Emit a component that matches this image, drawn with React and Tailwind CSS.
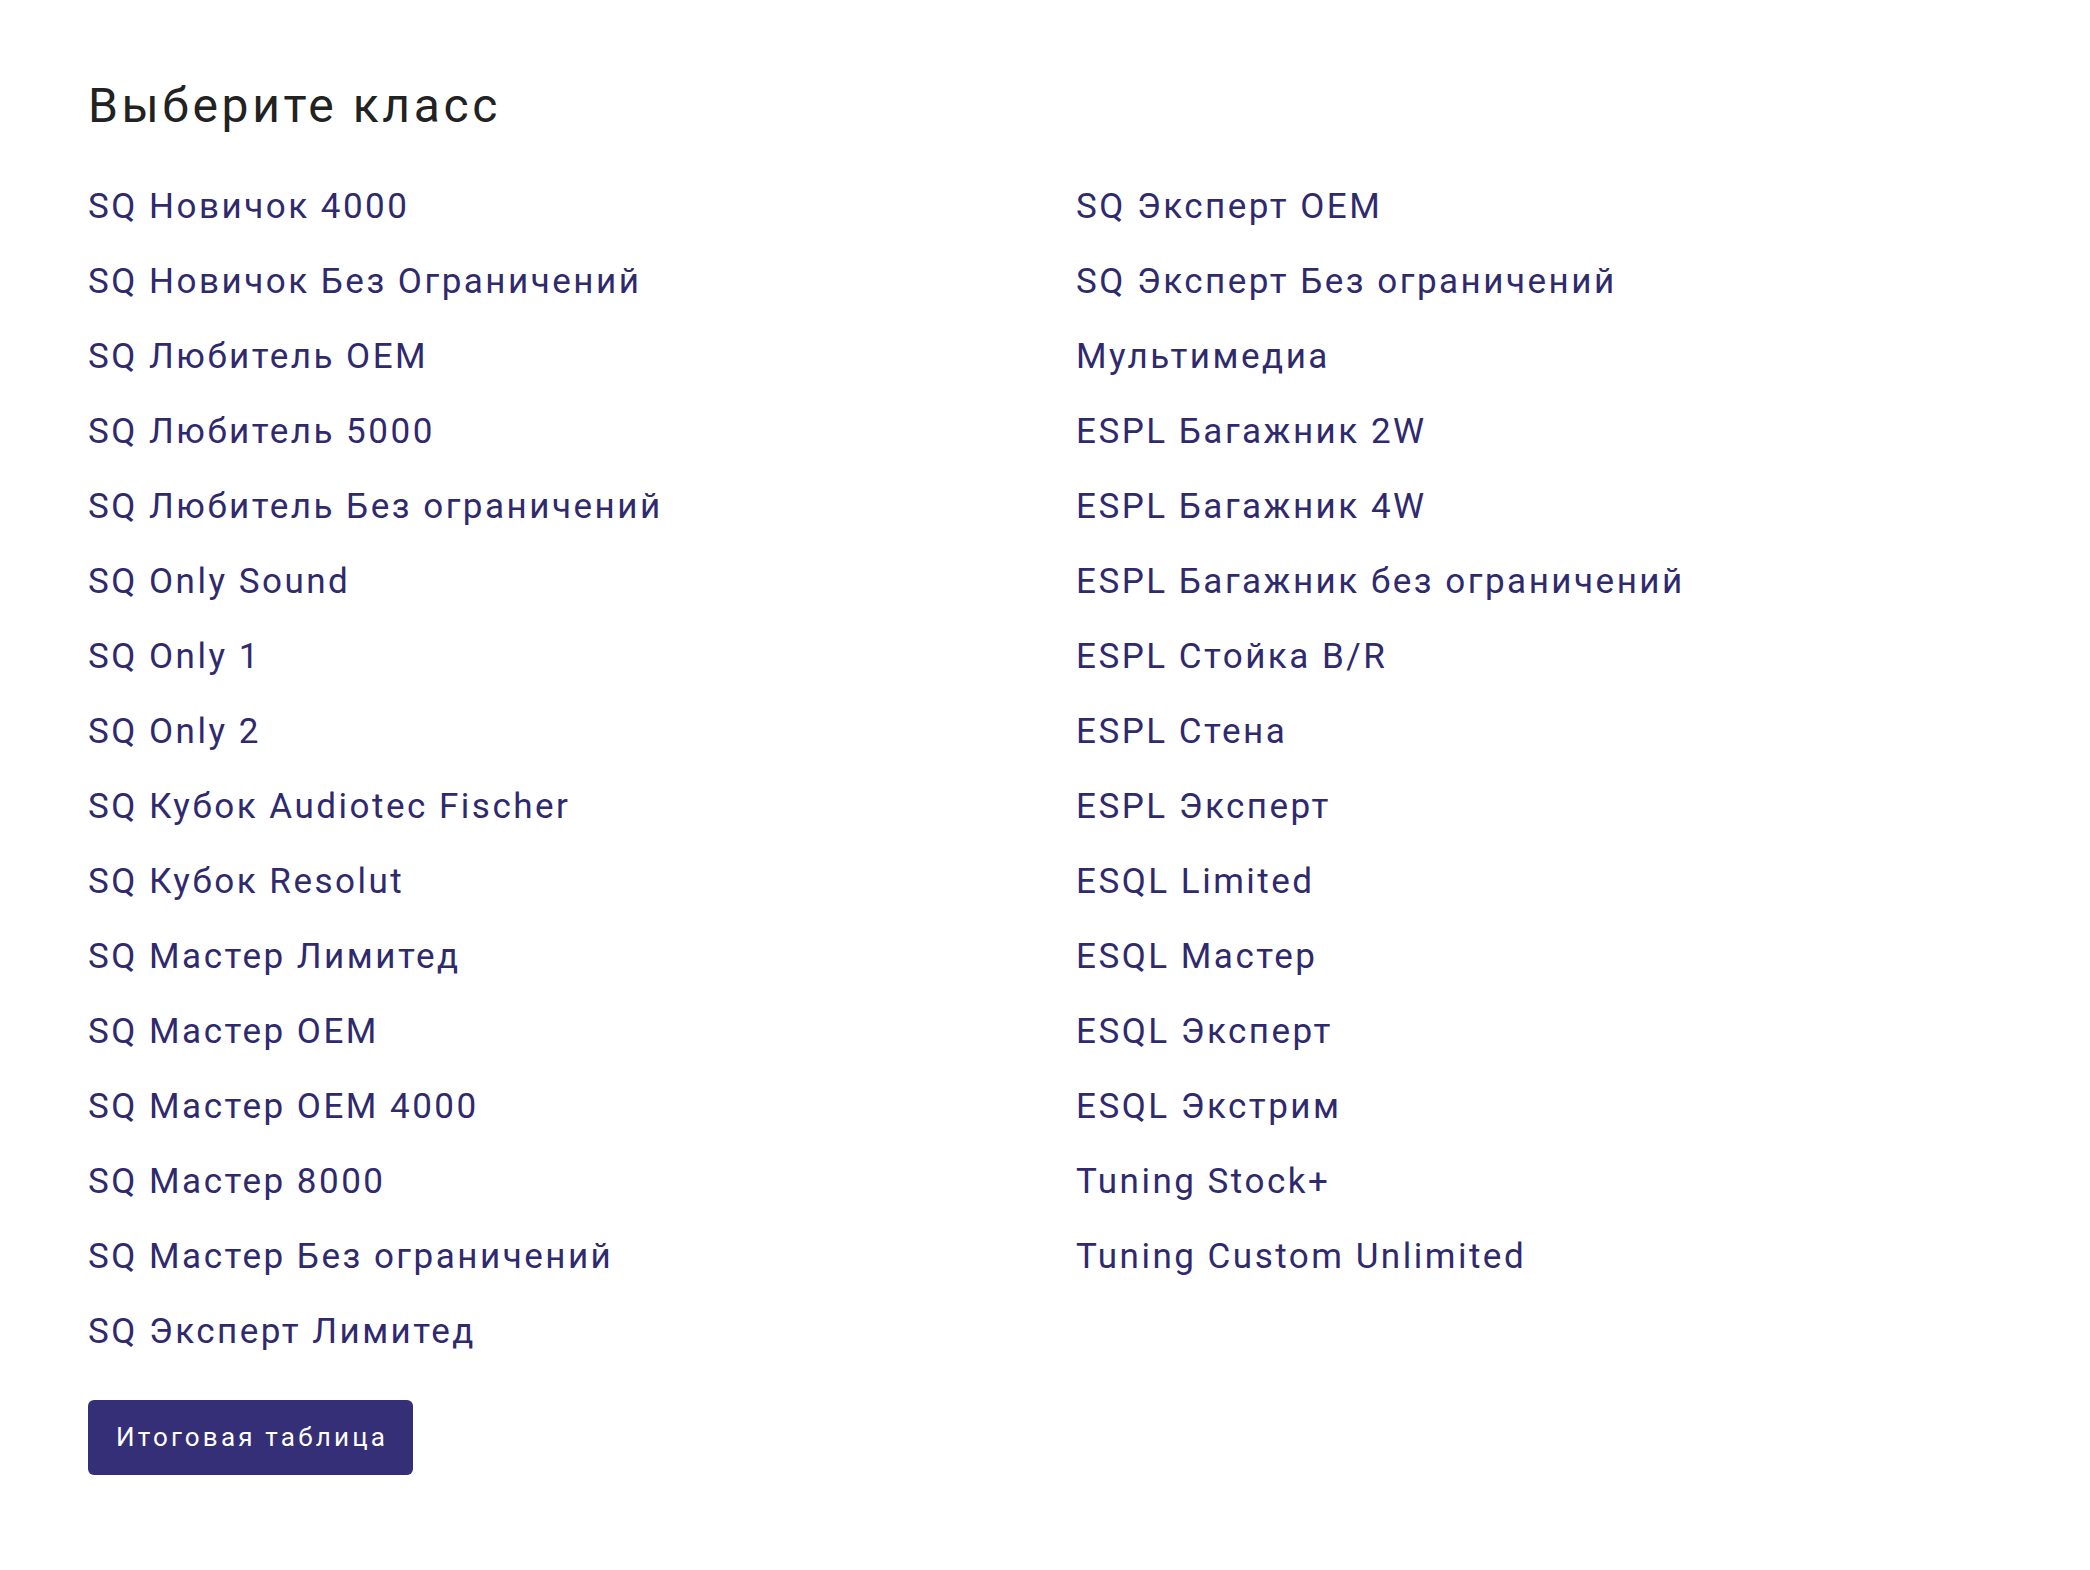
const LEFT = [
  "SQ Новичок 4000",
  "SQ Новичок Без Ограничений",
  "SQ Любитель OEM",
  "SQ Любитель 5000",
  "SQ Любитель Без ограничений",
  "SQ Only Sound",
  "SQ Only 1",
  "SQ Only 2",
  "SQ Кубок Audiotec Fischer",
  "SQ Кубок Resolut",
  "SQ Мастер Лимитед",
  "SQ Мастер OEM",
  "SQ Мастер OEM 4000",
  "SQ Мастер 8000",
  "SQ Мастер Без ограничений",
  "SQ Эксперт Лимитед",
]

const RIGHT = [
  "SQ Эксперт OEM",
  "SQ Эксперт Без ограничений",
  "Мультимедиа",
  "ESPL Багажник 2W",
  "ESPL Багажник 4W",
  "ESPL Багажник без ограничений",
  "ESPL Стойка B/R",
  "ESPL Стена",
  "ESPL Эксперт",
  "ESQL Limited",
  "ESQL Мастер",
  "ESQL Эксперт",
  "ESQL Экстрим",
  "Tuning Stock+",
  "Tuning Custom Unlimited",
]

function ClassList({ items }) {
  return (
    <ul className="flex flex-col">
      {items.map(name => (
        <li key={name}>
          <a href="#" className="text-[35px] leading-[75px] tracking-[2.5px] text-[#2f2a6d] hover:underline">{name}</a>
        </li>
      ))}
    </ul>
  )
}

export default function App() {
  return (
    <div className="min-h-screen bg-white font-['Roboto',sans-serif] pl-[88px] pt-[77px]">
      <h1 className="text-[48px] leading-[1.2] tracking-[3.6px] text-[#222222]">Выберите класс</h1>

      <div className="grid grid-cols-[988px_1fr] mt-[34px]">
        <ClassList items={LEFT} />
        <ClassList items={RIGHT} />
      </div>

      <button className="mt-[31px] h-[75px] pl-[28px] pr-[25px] rounded-md bg-[#352f78] text-white text-[26px] tracking-[3.2px]">
        Итоговая таблица
      </button>
    </div>
  )
}
